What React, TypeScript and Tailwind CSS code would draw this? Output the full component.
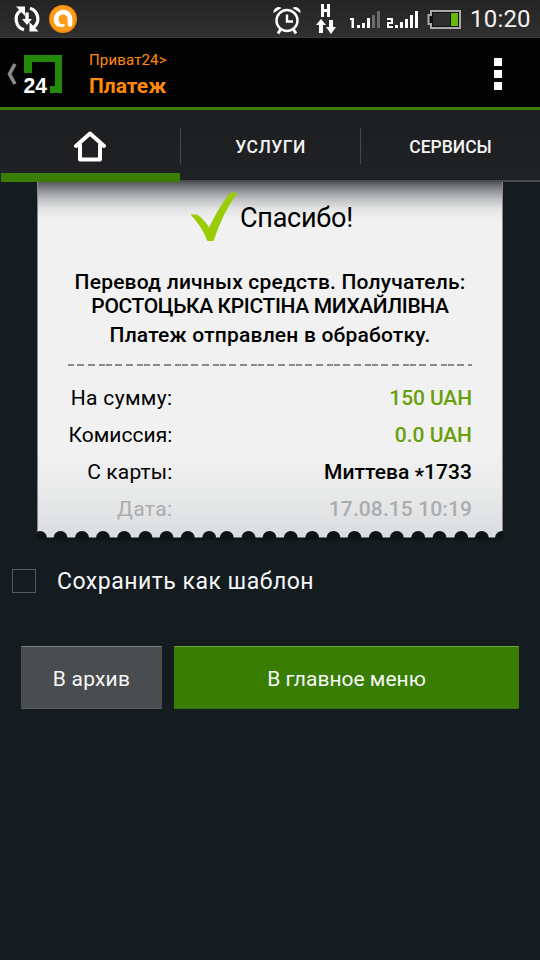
import React from 'react';

const NOTCHES = [
  3, 23.5, 45, 66, 87.2, 108.5, 129.5, 150.8, 172.2, 189.8, 211.5, 232.5,
  253.8, 275.2, 296.5, 317.5, 338.8, 359.8, 381.2, 402.5, 424.2, 444.8, 465,
];

const DETAILS = [
  { label: 'На сумму:', value: '150 UAH', labelClass: 'text-black tracking-[0.35px]', valueClass: 'text-[#689f0a] tracking-[-0.1px]' },
  { label: 'Комиссия:', value: '0.0 UAH', labelClass: 'text-black tracking-[0.05px]', valueClass: 'text-[#689f0a]' },
  { label: 'С карты:', value: 'Миттева *1733', labelClass: 'text-black tracking-[0.15px]', valueClass: 'text-black tracking-[0.05px]' },
  { label: 'Дата:', value: '17.08.15 10:19', labelClass: 'text-[#abacad] tracking-[0.4px]', valueClass: 'text-[#abacad] tracking-[0.1px]' },
];

const StatusBar: React.FC = () => (
  <div className="flex h-[38px] items-start border-b border-[#3c3c3c] bg-linear-to-b from-[#242424] to-[#303030]">
    <svg width="80" height="37" viewBox="0 0 80 37" className="shrink-0">
      <g fill="none" stroke="#fff" strokeWidth="3.200">
        <path d="M20.500 10.500A11 11 0 0 0 24 29.800" />
        <path d="M33.500 27.500A11 11 0 0 0 30 8.200" />
      </g>
      <path fill="#fff" d="M16 6.500h9v9.500zM38.500 31.500h-9v-9.500zM25.300 12.500h3.400v6.500h3.300l-5 6-5-6h3.300z" />
      <circle cx="63" cy="19" r="14" fill="#f58a0b" />
      <circle cx="63" cy="18.500" r="12.500" fill="#fb9c1c" />
      <path fill="none" stroke="#fff" strokeWidth="4.600" strokeLinecap="round" d="M58 24A7 7 0 1 1 70 18.500V24.500" />
      <path fill="none" stroke="#fff" strokeWidth="2.600" strokeLinecap="round" d="M58 24q2.500 2.500 5.500 1.300" />
    </svg>
    <div className="flex-1" />
    <svg width="196" height="37" viewBox="268 0 196 37" className="shrink-0">
      <g fill="none" stroke="#fff" strokeWidth="2.400">
        <circle cx="287" cy="20.500" r="10.500" />
        <path strokeWidth="3" d="M280.500 29.500l-2.500 4M293.500 29.500l2.500 4" />
        <path d="M287 14.500v7h6" />
      </g>
      <path fill="#fff" d="M273.500 13a5.200 5.200 0 0 1 8-5zM300.500 13a5.200 5.200 0 0 0-8-5z" />
      <path fill="#fff" d="M321 4h3v5h3V4h3v13h-3v-5h-3v5h-3zM321 19l5 6h-3v8h-4v-8h-3zM331 34l-5-7h3v-7h4v7h3z" />
      <path fill="#fff" d="M350 18h4v10h-2.500v-8H350zM357 25h3v3h-3zM362 23h3v5h-3zM367 18h3v10h-3z" />
      <path fill="#6b6b6b" d="M372 15h3v13h-3zM377 11h3v17h-3z" />
      <path fill="#fff" d="M387 18h6v6h-4v2h4v2h-6v-6h4v-2h-4zM395 25h3v3h-3zM400 22h3v6h-3zM405 19h3v9h-3zM410 15h3v13h-3zM415 11h3v17h-3z" />
      <path fill="#111" stroke="#aaa" strokeWidth="2" d="M431 11h29v17h-29v-4h-2.500v-9h2.500z" />
      <path fill="#2e2e2e" d="M433 13h17v13h-17z" />
      <path fill="#66b80b" d="M451 13h7v13h-7z" />
    </svg>
    <div className="w-[76px] pl-[6px] text-[24px] leading-[38px] tracking-[0.2px] text-[#f2f2f2]">10:20</div>
  </div>
);

const ActionBar: React.FC = () => (
  <div className="flex h-[72px] border-b-[3px] border-[#3d7a08] bg-[#030303]">
    <svg width="89" height="69" viewBox="0 38 89 69" className="shrink-0">
      <path fill="none" stroke="#8c8c8c" strokeWidth="3.600" d="M15 64l-5.500 10 5.500 10" />
      <path fill="#248a0c" d="M24 55h38v38H50v-7h5V62H32v11h-8z" />
      <text x="23.500" y="92.500" fontSize="22" fontWeight="700" fill="#fff" fontFamily="Liberation Sans, sans-serif" textLength="23.500" lengthAdjust="spacingAndGlyphs">24</text>
    </svg>
    <div className="flex flex-col pt-[12px] text-[#ff8a0a]">
      <span className="text-[15px] leading-5 tracking-[0.15px]">Приват24&gt;</span>
      <span className="mt-1 text-[21px] leading-6 font-bold">Платеж</span>
    </div>
    <div className="ml-auto flex w-[46px] flex-col gap-1 pt-5">
      <span className="size-2 bg-white" />
      <span className="size-2 bg-white" />
      <span className="size-2 bg-white" />
    </div>
  </div>
);

const Tabs: React.FC = () => (
  <div className="flex h-[72px] bg-linear-to-b from-[#1d1e1f] to-[#212225] text-[17.500px] font-medium text-[#f4f4f4]">
    <div className="flex w-[180px] flex-col">
      <div className="flex h-[63px] justify-center pt-[21px]">
        <svg width="34" height="32" viewBox="0 0 34 32">
          <path fill="none" stroke="#fff" strokeWidth="4" strokeLinejoin="round" strokeLinecap="round" d="M3 15L17 2.500 31 15M7 14v14.500h20V14" />
        </svg>
      </div>
      <div className="ml-px h-[9px] bg-[#3a7d03]" />
    </div>
    <div className="flex w-[180px] flex-col border-b-2 border-[#4b4c4e]">
      <div className="mt-[18px] h-9 border-l border-[#47484a] text-center leading-[38px] tracking-[0.45px]">УСЛУГИ</div>
    </div>
    <div className="flex w-[180px] flex-col border-b-2 border-[#4b4c4e]">
      <div className="mt-[18px] h-9 border-l border-[#47484a] text-center leading-[38px]">СЕРВИСЫ</div>
    </div>
  </div>
);

const Receipt: React.FC = () => (
  <div className="ml-[37px] w-[466px]">
    <div className="h-[349px] border-x border-[#85898c] bg-[linear-gradient(to_bottom,#55575a_0px,#8c8e91_8px,#bdbfc1_17px,#e3e4e4_27px,#f1f1f1_38px,#f1f1f1_270px,#e9eaea_310px,#dcdee0_349px)]">
      <div className="flex h-[88px] pl-[152px]">
        <svg width="50" height="70" viewBox="190 182 50 70" className="shrink-0">
          <path fill="#99cc05" d="M190.500 214.500H197q7 4.500 12 13Q219 207 229 194q3-2 8.500-1.200Q223 212 213.500 241h-6q-6-15-17-26.500z" />
        </svg>
        <span className="text-[27px] leading-[72px] tracking-[-0.25px] whitespace-nowrap text-black">Спасибо!</span>
      </div>
      <div className="flex flex-col items-center text-[21px] leading-6 font-medium whitespace-nowrap text-black">
        <span className="tracking-[0.2px]">Перевод личных средств. Получатель:</span>
        <span className="tracking-[-0.35px]">РОСТОЦЬКА КРІСТІНА МИХАЙЛІВНА</span>
        <span className="mt-[5px] tracking-[0.2px]">Платеж отправлен в обработку.</span>
      </div>
      <div className="mt-[17px] ml-[30px] h-[2px] w-[404px] bg-[repeating-linear-gradient(to_right,#8b8b8b_0px_6px,transparent_6px_9.500px,#8b8b8b_9.500px_16px,transparent_16px_20px,#8b8b8b_20px_27px,transparent_27px_31px,#8b8b8b_31px_37px,transparent_37px_38px)]" />
      <div className="mt-[14px] flex flex-col pr-[30px] text-[21px] leading-[37px]">
        {DETAILS.map((row) => (
          <div key={row.label} className="flex justify-between">
            <span className={`w-[134.500px] text-right whitespace-nowrap ${row.labelClass}`}>{row.label}</span>
            <span className={`font-medium whitespace-nowrap ${row.valueClass}`}>
              {row.value.split('*').map((part, i) => (
                <React.Fragment key={part}>
                  {i > 0 && <span className="inline-block translate-y-[4px] leading-none">*</span>}
                  {part}
                </React.Fragment>
              ))}
            </span>
          </div>
        ))}
      </div>
    </div>
    {/* torn paper edge */}
    <svg width="466" height="11" viewBox="0 0 466 11" className="block">
      <defs>
        <linearGradient id="edgeShadow" x1="0" y1="0" x2="0" y2="1">
          <stop offset="0" stopColor="#0c1113" />
          <stop offset="1" stopColor="#151c20" />
        </linearGradient>
        <clipPath id="paperStrip">
          <rect width="466" height="7" />
        </clipPath>
      </defs>
      <rect width="466" height="7" fill="#dadcde" />
      <rect y="6.500" width="466" height="4.500" fill="url(#edgeShadow)" />
      <g clipPath="url(#paperStrip)">
        {NOTCHES.map((cx) => (
          <circle key={cx} cx={cx} cy="7" r="7" fill="#0e1316" />
        ))}
      </g>
    </svg>
  </div>
);

export default function App() {
  return (
    <div className="h-[960px] w-[540px] overflow-hidden bg-[#151c20] font-['Roboto',sans-serif]">
      <StatusBar />
      <ActionBar />
      <Tabs />
      <Receipt />
      <div className="mt-[15px] flex h-12 items-center pl-[12px]">
        <div className="size-6 border border-[#535a5d]" />
        <span className="ml-[21px] pt-[2px] text-[23px] tracking-[0.5px] text-[#f5f7f8]">Сохранить как шаблон</span>
      </div>
      <div className="mt-[41px] flex gap-3 pl-[21px] text-[21px] leading-[64px] text-[#f5f7f8]">
        <button className="h-[63px] w-[141px] rounded-[1px] border-t border-b border-t-[#7c7f81] border-b-[#5b5e61] bg-[#4a4d50] tracking-[0.2px]">В архив</button>
        <button className="h-[63px] w-[345px] rounded-[1px] border-t border-b border-t-[#6ba33c] border-b-[#386d0c] bg-[#3a7d03]">В главное меню</button>
      </div>
    </div>
  );
}
